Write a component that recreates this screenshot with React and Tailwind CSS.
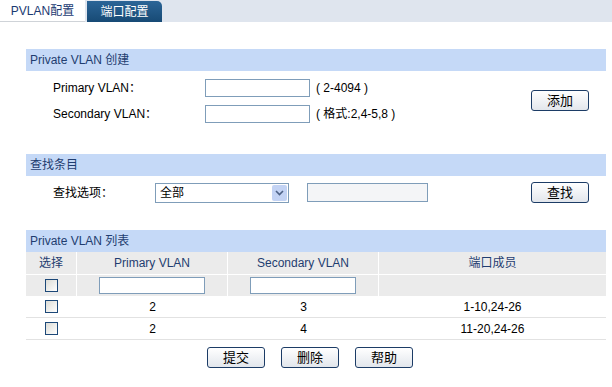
import React from 'react'

const font = { fontFamily: '"Liberation Sans", "Noto Sans CJK SC", sans-serif' }

function Btn({ children }) {
  return (
    <button className="w-[58px] h-[21px] rounded-[3px] border border-[#1c3c66] bg-gradient-to-b from-white to-[#e2e6ec] text-[13px] leading-none text-black">
      {children}
    </button>
  )
}

function Check() {
  return <span className="block w-[13px] h-[13px] border border-[#1c4878] bg-gradient-to-br from-[#dcdcd6] to-white" />
}

function Header({ children }) {
  return (
    <div className="h-[22px] bg-[#c5d9f7] flex items-center pl-[4px] text-[12px] text-[#1f3d70]">
      {children}
    </div>
  )
}

export default function App() {
  const rows = [
    { p: '2', s: '3', ports: '1-10,24-26' },
    { p: '2', s: '4', ports: '11-20,24-26' },
  ]

  return (
    <div className="w-[612px] h-[387px] bg-white overflow-hidden" style={font}>
      {/* tabs */}
      <div className="h-[22px] bg-[#dfe5ee] flex items-end">
        <div className="w-[85px] h-[22px] bg-white border-b border-[#cfd3d8] flex items-center justify-center text-[12px] text-[#1b3a72]">
          PVLAN配置
        </div>
        <div className="ml-[2px] w-[75px] h-[21px] rounded-tr-[5px] bg-gradient-to-b from-[#2b6597] to-[#174a75] flex items-center justify-center text-[12px] text-white">
          端口配置
        </div>
      </div>

      <div className="pl-[26px] pr-[6px]">
        {/* create */}
        <div className="mt-[27px]">
          <Header>Private VLAN 创建</Header>
          <div className="flex items-center pr-[17px]">
            <div className="flex-1 flex flex-col gap-[8px] pt-[8px] pl-[27px] text-[12px] text-black">
              <div className="flex items-center h-[18px]">
                <span className="w-[152px]">Primary VLAN：</span>
                <span className="w-[105px] h-[18px] border border-[#7f9db9] bg-white" />
                <span className="ml-[6px]">( 2-4094 )</span>
              </div>
              <div className="flex items-center h-[18px]">
                <span className="w-[152px]">Secondary VLAN：</span>
                <span className="w-[105px] h-[18px] border border-[#7f9db9] bg-white" />
                <span className="ml-[6px]">( 格式:2,4-5,8 )</span>
              </div>
            </div>
            <div className="pt-[6px]">
              <Btn>添加</Btn>
            </div>
          </div>
        </div>

        {/* search */}
        <div className="mt-[31px]">
          <Header>查找条目</Header>
          <div className="flex items-center pt-[6px] pl-[27px] pr-[17px] text-[12px] text-black">
            <span className="w-[102px]">查找选项：</span>
            <div className="w-[134px] h-[20px] border border-[#7f9db9] bg-white flex items-center justify-between pl-[4px] pr-[1px]">
              <span>全部</span>
              <span className="w-[15px] h-[16px] rounded-[2px] bg-[#c3d3f4] flex items-center justify-center">
                <svg width="9" height="6" viewBox="0 0 9 6">
                  <path d="M1 1 L4.5 4.5 L8 1" stroke="#4d6185" strokeWidth="1.6" fill="none" />
                </svg>
              </span>
            </div>
            <span className="ml-[18px] w-[121px] h-[19px] border border-[#7f9db9] bg-[#f4f5f7]" />
            <div className="ml-auto">
              <Btn>查找</Btn>
            </div>
          </div>
        </div>

        {/* list */}
        <div className="mt-[27px]">
          <Header>Private VLAN 列表</Header>
          <div className="grid grid-cols-[51px_151px_151px_227px] text-[12px]">
            <div className="h-[22px] bg-[#ebebeb] border-r border-white flex items-center justify-center text-[#1f3d70]">选择</div>
            <div className="h-[22px] bg-[#ebebeb] border-r border-white flex items-center justify-center text-[#1f3d70]">Primary VLAN</div>
            <div className="h-[22px] bg-[#ebebeb] border-r border-white flex items-center justify-center text-[#1f3d70]">Secondary VLAN</div>
            <div className="h-[22px] bg-[#ebebeb] flex items-center justify-center text-[#1f3d70]">端口成员</div>

            <div className="h-[22px] bg-[#ebebeb] border-t border-r border-white flex items-center justify-center"><Check /></div>
            <div className="h-[22px] bg-[#ebebeb] border-t border-r border-white flex items-center justify-center">
              <span className="w-[106px] h-[17px] border border-[#7f9db9] bg-white" />
            </div>
            <div className="h-[22px] bg-[#ebebeb] border-t border-r border-white flex items-center justify-center">
              <span className="w-[106px] h-[17px] border border-[#7f9db9] bg-white" />
            </div>
            <div className="h-[22px] bg-[#ebebeb] border-t border-white" />

            {rows.map((r, i) => (
              <React.Fragment key={i}>
                <div className="h-[22px] border-b border-[#e2e2e2] flex items-center justify-center"><Check /></div>
                <div className="h-[22px] border-b border-[#e2e2e2] flex items-center justify-center text-black">{r.p}</div>
                <div className="h-[22px] border-b border-[#e2e2e2] flex items-center justify-center text-black">{r.s}</div>
                <div className="h-[22px] border-b border-[#e2e2e2] flex items-center justify-center text-black">{r.ports}</div>
              </React.Fragment>
            ))}
          </div>
        </div>
      </div>

      <div className="mt-[7px] pl-[8px] flex justify-center gap-[16px]">
        <Btn>提交</Btn>
        <Btn>删除</Btn>
        <Btn>帮助</Btn>
      </div>
    </div>
  )
}
